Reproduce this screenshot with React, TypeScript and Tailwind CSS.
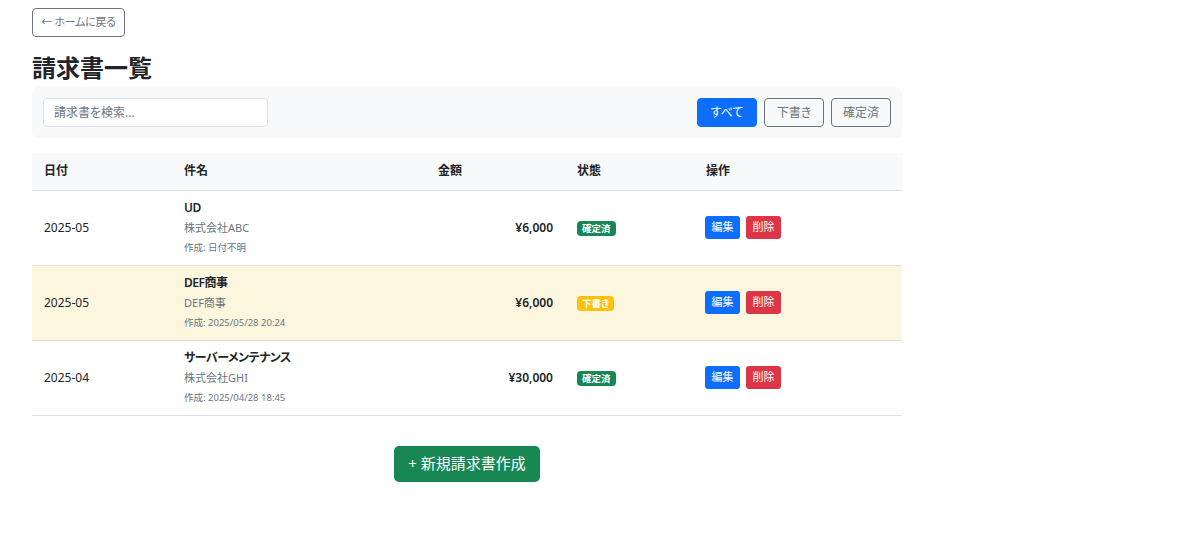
import React, { useState } from "react";

type Invoice = {
  id: number;
  month: string;
  title: string;
  client: string;
  created: string;
  amount: string;
  status: "draft" | "final";
};

const invoices: Invoice[] = [
  { id: 1, month: "2025-05", title: "UD", client: "株式会社ABC", created: "作成: 日付不明", amount: "¥6,000", status: "final" },
  { id: 2, month: "2025-05", title: "DEF商事", client: "DEF商事", created: "作成: 2025/05/28 20:24", amount: "¥6,000", status: "draft" },
  { id: 3, month: "2025-04", title: "サーバーメンテナンス", client: "株式会社GHI", created: "作成: 2025/04/28 18:45", amount: "¥30,000", status: "final" },
];

const App: React.FC = () => {
  const [filter, setFilter] = useState("all");
  const [query, setQuery] = useState("");

  const filterBtn = (key: string, label: string) =>
    filter === key ? (
      <button
        onClick={() => setFilter(key)}
        className="h-[29px] w-[60px] rounded-[4px] border border-[#0d6efd] bg-[#0d6efd] text-[12px] text-white"
      >
        {label}
      </button>
    ) : (
      <button
        onClick={() => setFilter(key)}
        className="h-[29px] w-[60px] rounded-[4px] border border-[#6c757d] bg-transparent text-[12px] text-[#6c757d]"
      >
        {label}
      </button>
    );

  return (
    <div className="min-h-[545px] bg-white font-['Noto_Sans','Noto_Sans_CJK_JP',sans-serif] text-[#212529] [font-feature-settings:'palt']">
      <div className="ml-[32px] w-[870px] pt-[8px]">
        {/* Back link */}
        <button className="flex h-[29px] w-[93px] items-center justify-center rounded-[4px] border border-[#6c757d] text-[11px] tracking-[-0.3px] text-[#6c757d]">
          ← ホームに戻る
        </button>

        <h1 className="mt-[13px] text-[24px] font-bold leading-[36px]">請求書一覧</h1>

        {/* Search + filters */}
        <div className="mt-[1px] flex h-[51px] items-center justify-between rounded-[6px] bg-[#f8f9fa] px-[11px]">
          <input
            value={query}
            onChange={(e) => setQuery(e.target.value)}
            placeholder="請求書を検索..."
            className="h-[29px] w-[225px] rounded-[4px] border border-[#dee2e6] bg-white px-[10px] text-[12px] outline-none placeholder:text-[#6c757d]"
          />
          <div className="flex gap-[7px]">
            {filterBtn("all", "すべて")}
            {filterBtn("draft", "下書き")}
            {filterBtn("final", "確定済")}
          </div>
        </div>

        {/* Table */}
        <table className="mt-[15px] w-full border-collapse text-[12px]">
          <thead>
            <tr className="h-[37px] border-b border-[#dee2e6] bg-[#f8f9fa]">
              <th className="w-[140px] px-[12px] text-left font-semibold">日付</th>
              <th className="w-[254px] px-[12px] text-left font-semibold">件名</th>
              <th className="w-[139px] px-[12px] text-left font-semibold">金額</th>
              <th className="w-[129px] px-[12px] text-left font-semibold">状態</th>
              <th className="px-[12px] text-left font-semibold">操作</th>
            </tr>
          </thead>
          <tbody>
            {invoices.map((inv) => (
              <tr
                key={inv.id}
                className={
                  inv.status === "draft"
                    ? "h-[75px] border-b border-[#dee2e6] bg-[#fdf6de]"
                    : "h-[75px] border-b border-[#dee2e6] bg-white"
                }
              >
                <td className="px-[12px]">{inv.month}</td>
                <td className="px-[12px]">
                  <div className="text-[12px] font-semibold leading-[18px] tracking-[-0.5px]">{inv.title}</div>
                  <div className="mt-[2px] text-[11px] leading-[18px] text-[#6c757d]">{inv.client}</div>
                  <div className="mt-[3px] text-[9.5px] leading-[16px] text-[#6c757d]">{inv.created}</div>
                </td>
                <td className="px-[12px] text-right font-semibold">{inv.amount}</td>
                <td className="px-[12px]">
                  {inv.status === "final" ? (
                    <span className="inline-block rounded-[4px] bg-[#198754] px-[5px] py-[1px] text-[9.5px] font-bold leading-[13px] text-white">
                      確定済
                    </span>
                  ) : (
                    <span className="inline-block rounded-[4px] bg-[#ffc107] px-[5px] py-[1px] text-[9.5px] font-bold leading-[13px] text-white">
                      下書き
                    </span>
                  )}
                </td>
                <td className="px-[11px]">
                  <div className="flex gap-[6px]">
                    <button className="h-[23px] w-[35px] rounded-[3px] bg-[#0d6efd] text-[11px] text-white">編集</button>
                    <button className="h-[23px] w-[35px] rounded-[3px] bg-[#dc3545] text-[11px] text-white">削除</button>
                  </div>
                </td>
              </tr>
            ))}
          </tbody>
        </table>

        <div className="mt-[30px] flex justify-center">
          <button className="h-[36px] w-[146px] rounded-[5px] bg-[#198754] text-[15px] text-white">
            + 新規請求書作成
          </button>
        </div>
      </div>
    </div>
  );
};

export default App;
